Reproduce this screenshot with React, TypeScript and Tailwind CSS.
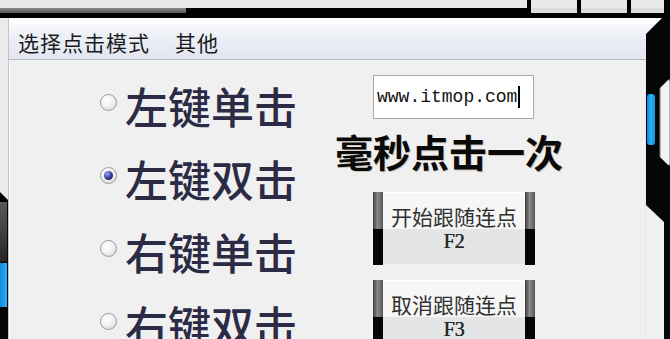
import React from "react";

const cjk = { fontFamily: '"Noto Sans CJK SC", "Noto Sans", sans-serif' };
const mono = { fontFamily: '"Liberation Mono", "DejaVu Sans Mono", monospace' };
const serif = { fontFamily: '"Liberation Serif", "DejaVu Serif", serif' };

function Radio({ checked }: { checked?: boolean }) {
  return (
    <div className="w-[17px] h-[17px] rounded-full border border-[#9a9a9a] bg-[radial-gradient(circle_at_40%_35%,#ffffff_0%,#f2f2f2_45%,#cfcfcf_100%)] flex items-center justify-center shrink-0">
      {checked && (
        <div className="w-[9px] h-[9px] rounded-full bg-[radial-gradient(circle_at_35%_30%,#9aa6ff_0%,#34348a_55%,#151550_100%)]" />
      )}
    </div>
  );
}

function RadioRow({ label, checked }: { label: string; checked?: boolean }) {
  return (
    <div className="h-[73px] flex items-center gap-[8px]">
      <div className="-mt-[6px]">
        <Radio checked={checked} />
      </div>
      <span className="text-[43px] leading-none font-medium text-[#2b2b45]" style={cjk}>
        {label}
      </span>
    </div>
  );
}

function Bar() {
  return (
    <div className="w-[10px] flex flex-col">
      <div className="h-1/2 bg-[linear-gradient(to_right,#3c3c3c,#8a8a8a_45%,#555555)]" />
      <div className="h-1/2 bg-[#050505]" />
    </div>
  );
}

function FButton({ label, fkey }: { label: string; fkey: string }) {
  return (
    <div className="w-[162px] h-[73px] flex ml-[38px]">
      <Bar />
      <div className="flex-1 relative flex flex-col">
        <div className="h-1/2 bg-[#f6f6f6] border-t border-[#ffffff]" />
        <div className="h-1/2 bg-[#e3e5e7] border-b border-[#f0f0f0]" />
        <div className="absolute inset-0 flex items-center justify-center">
          <p className="text-center text-[21px] leading-[23px] text-[#303030]" style={cjk}>
            {label}
            <br />
            <span className="text-[20px] text-[#2a2a2a] [text-shadow:0.5px_0_0_#2a2a2a]" style={serif}>
              {fkey}
            </span>
          </p>
        </div>
      </div>
      <Bar />
    </div>
  );
}

export default function App() {
  return (
    <div className="w-[670px] h-[339px] overflow-hidden bg-[#f0f0f0] flex flex-col">
      {/* top frame */}
      <div className="h-[18px] flex flex-col shrink-0">
        <div className="h-[8px] flex bg-[#e8e8e8]">
          <div className="w-[527px]" />
          <div className="w-[4px] bg-black" />
          <div className="w-[46px]" />
          <div className="w-[4px] bg-black" />
          <div className="w-[46px]" />
          <div className="w-[4px] bg-black" />
          <div className="w-[33px]" />
          <div className="flex-1 bg-black" />
        </div>
        <div className="h-[5px] flex bg-black">
          <div className="w-[186px] bg-[linear-gradient(to_bottom,#8a8a8a,#5a5a5a)]" />
          <div className="w-[341px]" />
          <div className="w-[4px] bg-black" />
          <div className="w-[46px] bg-[#dcdcdc]" />
          <div className="w-[4px] bg-black" />
          <div className="w-[46px] bg-[#dcdcdc]" />
          <div className="w-[4px] bg-black" />
          <div className="w-[33px] bg-[#dcdcdc]" />
        </div>
        <div className="h-[5px] bg-black" />
      </div>

      <div className="flex-1 flex">
        {/* left frame */}
        <svg width="8" height="321" className="shrink-0 block">
          <defs>
            <linearGradient id="lg" x1="0" y1="0" x2="0" y2="1">
              <stop offset="0" stopColor="#5a5a5a" />
              <stop offset="1" stopColor="#262626" />
            </linearGradient>
            <linearGradient id="lb" x1="0" y1="0" x2="1" y2="0">
              <stop offset="0" stopColor="#0f8ad8" />
              <stop offset="1" stopColor="#2eb0f4" />
            </linearGradient>
          </defs>
          <rect x="0" y="0" width="8" height="321" fill="#ebebeb" />
          <polygon points="0,174 8,182 8,321 0,321" fill="#050505" />
          <rect x="0" y="184" width="7" height="60" fill="url(#lg)" />
          <rect x="0" y="245" width="7" height="44" fill="url(#lb)" />
        </svg>

        {/* main window */}
        <div className="flex-1 flex flex-col border-l border-[#c4c4c4]">
          <div className="h-[42px] shrink-0 flex items-center gap-[25px] pl-[9px] pt-[6px] bg-[linear-gradient(to_bottom,#ffffff,#eef0f7_40%,#e2e6f1)] border-b border-[#b4b8c4] border-t border-t-[#ffffff]">
            <span className="text-[21px] leading-none text-[#1a1a1a] tracking-[1px]" style={cjk}>
              选择点击模式
            </span>
            <span className="text-[21px] leading-none text-[#1a1a1a] tracking-[1px]" style={cjk}>
              其他
            </span>
          </div>
          <div className="flex-1 flex border-l border-[#fbfbfb] pt-[9px] border-r border-r-[#e8e8e8]">
            <div className="w-[235px] ml-[90px] flex flex-col shrink-0">
              <RadioRow label="左键单击" />
              <RadioRow label="左键双击" checked />
              <RadioRow label="右键单击" />
              <RadioRow label="右键双击" />
            </div>
            <div className="flex flex-col pt-[6px]">
              <div className="ml-[38px] w-[161px] h-[44px] bg-white border border-[#a8a8a8] flex items-center pl-[3px]">
                <span className="text-[18px] leading-none text-[#111]" style={mono}>
                  www.itmop.com
                </span>
                <div className="w-[1.5px] h-[22px] bg-black ml-[1px]" />
              </div>
              <div
                className="mt-[13px] h-[38px] text-[38px] leading-[38px] font-bold text-[#0a0a0a] whitespace-nowrap [text-shadow:1px_1px_0_rgba(140,110,70,0.35)]"
                style={cjk}
              >
                毫秒点击一次
              </div>
              <div className="mt-[22px] flex flex-col gap-[15px]">
                <FButton label="开始跟随连点" fkey="F2" />
                <FButton label="取消跟随连点" fkey="F3" />
              </div>
            </div>
          </div>
        </div>

        {/* right frame */}
        <svg width="24" height="321" className="shrink-0 block">
          <defs>
            <linearGradient id="mg" x1="0" y1="0" x2="0" y2="1">
              <stop offset="0" stopColor="#ffffff" />
              <stop offset="0.4" stopColor="#eef0f7" />
              <stop offset="1" stopColor="#e2e6f1" />
            </linearGradient>
            <linearGradient id="rb" x1="0" y1="0" x2="1" y2="0">
              <stop offset="0" stopColor="#0e86d6" />
              <stop offset="0.5" stopColor="#2ab0f6" />
              <stop offset="1" stopColor="#1490dc" />
            </linearGradient>
          </defs>
          <rect x="0" y="0" width="24" height="321" fill="#f0f0f0" />
          <rect x="0" y="0" width="24" height="42" fill="url(#mg)" />
          <polygon points="16,0 24,0 24,321 18,321 18,204 0,187 0,16" fill="#060606" />
          <polygon points="22,62 24,62 24,147 22,147 14,139 14,70" fill="#f2f2f2" stroke="#7a7a7a" strokeWidth="1" />
          <rect x="1" y="76" width="8" height="51" rx="3" fill="url(#rb)" />
        </svg>
      </div>
    </div>
  );
}
